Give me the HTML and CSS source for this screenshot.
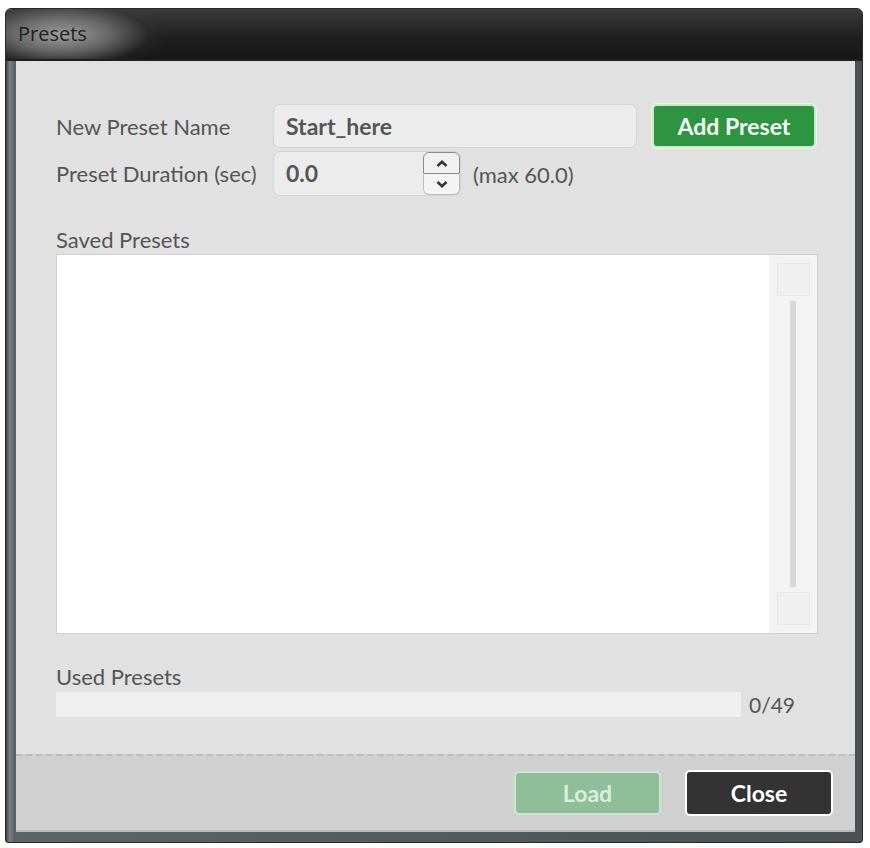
FILE: index.html
```html
<!DOCTYPE html>
<html>
<head>
<meta charset="utf-8">
<link rel="stylesheet" href="styles.css">
</head>
<body>
<div class="window">
  <div class="titlebar"><span class="title">Presets</span></div>
  <div class="panel">
    <div class="body">
      <div class="form">
        <label class="lbl">New Preset Name</label>
        <div class="input name-input">Start_here</div>
        <button class="btn btn-add">Add Preset</button>
        <label class="lbl">Preset Duration (sec)</label>
        <div class="dur-row">
          <div class="input dur-input">
            <span class="dur-val">0.0</span>
            <div class="spin">
              <div class="spin-btn up"><svg width="12" height="7" viewBox="0 0 12 7"><path d="M1.5 6 L6 1.8 L10.5 6" fill="none" stroke="#333" stroke-width="2.6"/></svg></div>
              <div class="spin-btn down"><svg width="12" height="7" viewBox="0 0 12 7"><path d="M1.5 1 L6 5.2 L10.5 1" fill="none" stroke="#333" stroke-width="2.6"/></svg></div>
            </div>
          </div>
          <span class="hint">(max 60.0)</span>
        </div>
      </div>
      <div class="section-lbl saved-lbl">Saved Presets</div>
      <div class="listbox">
        <div class="list-area"></div>
        <div class="scrollbar">
          <div class="sb-btn"></div>
          <div class="sb-track"><div class="sb-line"></div></div>
          <div class="sb-btn"></div>
        </div>
      </div>
      <div class="section-lbl used-lbl">Used Presets</div>
      <div class="used-row">
        <div class="progress"></div>
        <span class="count">0/49</span>
      </div>
    </div>
    <div class="footer">
      <button class="btn btn-load">Load</button>
      <button class="btn btn-close">Close</button>
    </div>
  </div>
</div>
</body>
</html>
```
FILE: styles.css
```css
html, body {
  margin: 0;
  padding: 0;
  background: #ffffff;
}
body {
  font-family: Lato, "Open Sans", sans-serif;
  padding: 8px 0 0 5px;
}
.window {
  width: 858px;
  height: 835px;
  box-sizing: border-box;
  background: linear-gradient(90deg, #3c4246 0, #7d8488 4px, #5d6468 8px, #4a5155 100%);
  border-radius: 6px 6px 3px 3px;
  padding: 0 7px 10px 10px;
  display: flex;
  flex-direction: column;
  border: 1px solid #2a2a2a;
}
.titlebar {
  height: 50px;
  margin: 0 -7px 0 -10px;
  border-radius: 6px 6px 0 0;
  background:
    radial-gradient(ellipse 110px 38px at 55px 26px, rgba(165,165,165,0.95) 0%, rgba(130,130,130,0.7) 45%, rgba(60,60,60,0.2) 80%, rgba(0,0,0,0) 100%),
    linear-gradient(180deg, #3a3a3a 0%, #1e1e1e 60%, #171717 100%);
  display: flex;
  align-items: center;
  padding-left: 12px;
  border-bottom: 2px solid #1f1f1f;
}
.title {
  font-family: "Open Sans", sans-serif;
  font-size: 20px;
  color: #222;
  margin-top: -2px;
}
.panel {
  flex: 1;
  background: #e1e1e1;
  display: flex;
  flex-direction: column;
  border-bottom: 2px solid #b8b8b8;
}
.body {
  flex: 1;
  padding: 43px 38px 0 40px;
  display: flex;
  flex-direction: column;
}
.form {
  display: grid;
  grid-template-columns: 202px 364px 164px;
  column-gap: 15px;
  row-gap: 3px;
  align-items: center;
}
.lbl, .section-lbl, .hint {
  font-size: 22px;
  color: #555;
}
.input {
  box-sizing: border-box;
  background: #ececec;
  border: 1px solid #d3d3d3;
  border-radius: 7px;
  height: 44px;
  font-weight: 700;
  font-size: 23px;
  color: #555;
  display: flex;
  align-items: center;
  padding-left: 12px;
}
.name-input {
  width: 364px;
}
.btn {
  font-family: Lato, sans-serif;
  font-weight: 700;
  font-size: 23px;
  border-radius: 5px;
  cursor: pointer;
  padding: 0;
}
.btn-add {
  height: 44px;
  width: 164px;
  background: #2e9442;
  color: #f4fff4;
  border: 2px solid #c6ecc8;
  box-shadow: 0 0 0 1px #e7f6e8;
}
.dur-row {
  grid-column: 2 / 4;
  display: flex;
  align-items: center;
  gap: 12px;
}
.dur-input {
  width: 188px;
  height: 45px;
  padding-right: 0;
  justify-content: space-between;
}
.dur-val {
  margin-top: -2px;
}
.spin {
  width: 37px;
  height: 43px;
  display: flex;
  flex-direction: column;
}
.spin-btn {
  flex: 1;
  box-sizing: border-box;
  background: #f1f1f1;
  border: 1px solid #8a8a8a;
  display: flex;
  align-items: center;
  justify-content: center;
}
.spin-btn.up {
  border-radius: 6px 6px 1px 1px;
}
.spin-btn.down {
  border-radius: 1px 1px 6px 6px;
  border-top: none;
  border-color: #bdbdbd;
  background: #f4f4f4;
}
.hint {
  margin-top: 2px;
}
.section-lbl {
  line-height: 24px;
}
.saved-lbl {
  margin-top: 32px;
}
.listbox {
  margin-top: 2px;
  width: 762px;
  height: 380px;
  box-sizing: border-box;
  border: 1px solid #cfcfcf;
  background: #ffffff;
  display: flex;
}
.list-area {
  flex: 1;
}
.scrollbar {
  width: 48px;
  background: #f3f3f3;
  display: flex;
  flex-direction: column;
  align-items: center;
  padding: 8px 0 8px;
  box-sizing: border-box;
  gap: 5px;
}
.sb-btn {
  width: 33px;
  height: 33px;
  box-sizing: border-box;
  border: 1px solid #e8e8e8;
  background: #f0f0f0;
}
.sb-track {
  flex: 1;
  display: flex;
  justify-content: center;
}
.sb-line {
  width: 6px;
  background: #d8d8d8;
}
.used-lbl {
  margin-top: 31px;
}
.used-row {
  margin-top: 2px;
  display: flex;
  align-items: center;
  gap: 8px;
}
.progress {
  width: 685px;
  height: 25px;
  background: #efefef;
}
.count {
  font-size: 21px;
  color: #555;
  margin-top: 1px;
}
.footer {
  height: 74px;
  background: #d0d0d0;
  border-top: 2px dashed #bdbdbd;
  display: flex;
  justify-content: flex-end;
  align-items: center;
  gap: 24px;
  padding-right: 22px;
}
.btn-load {
  width: 147px;
  height: 44px;
  background: #8ebf99;
  color: #d9eedd;
  border: 2px solid #cce6d1;
}
.btn-close {
  width: 148px;
  height: 46px;
  background: #333333;
  color: #ffffff;
  border: 2px solid #ffffff;
  box-shadow: 0 0 0 1px #cfcfcf;
}
```
